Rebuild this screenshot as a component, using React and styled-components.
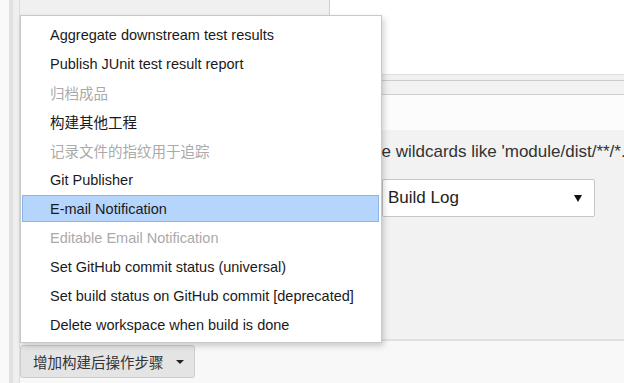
import React from 'react';
import styled, { createGlobalStyle } from 'styled-components';

const GlobalStyle = createGlobalStyle`
  html, body {
    margin: 0;
    padding: 0;
    overflow: hidden;
  }
  body {
    font-family: "Liberation Sans", "Noto Sans CJK SC", Arial, sans-serif;
    color: #333;
  }
`;

const menuItems = [
  { label: 'Aggregate downstream test results' },
  { label: 'Publish JUnit test result report' },
  { label: '归档成品', disabled: true },
  { label: '构建其他工程' },
  { label: '记录文件的指纹用于追踪', disabled: true },
  { label: 'Git Publisher' },
  { label: 'E-mail Notification', active: true },
  { label: 'Editable Email Notification', disabled: true },
  { label: 'Set GitHub commit status (universal)' },
  { label: 'Set build status on GitHub commit [deprecated]' },
  { label: 'Delete workspace when build is done' },
];

const App = () => {
  return (
    <>
      <GlobalStyle />
      <Page>
        <Gutter />
        <Rail />
        <RailInner />
        <Main>
          <TopRow>
            <TopBox />
          </TopRow>
          <HeaderBar />
          <SubBar />
          <WhiteRow />
          <Panel>
            <LabelCol />
            <FieldCol>
              <Help>You can use wildcards like 'module/dist/**/*.zip'. See the includes attribute of Ant fileset.</Help>
              <Select>
                <span>Build Log</span>
                <SelectArrow />
              </Select>
            </FieldCol>
          </Panel>
          <Footer>
            <AddButton>
              增加构建后操作步骤
              <Caret />
            </AddButton>
          </Footer>

          <Menu>
            {menuItems.map(item => (
              <Item key={item.label} disabled={item.disabled} active={item.active}>
                {item.label}
              </Item>
            ))}
          </Menu>
        </Main>
      </Page>
    </>
  );
};

export default App;

const Page = styled.div`
  display: flex;
  width: 624px;
  height: 383px;
  background: #f8f8f8;
  overflow: hidden;
`;

const Gutter = styled.div`
  width: 9px;
  flex-shrink: 0;
  background: #f9f9f9;
`;

const Rail = styled.div`
  width: 4px;
  flex-shrink: 0;
  background: #e1e1e1;
`;

const RailInner = styled.div`
  width: 6px;
  flex-shrink: 0;
  background: #efefef;
`;

const Main = styled.div`
  position: relative;
  flex: 1;
  display: flex;
  flex-direction: column;
  border-left: 1px solid #dcdcdc;
`;

const TopRow = styled.div`
  height: 74px;
  flex-shrink: 0;
  background: #fff;
`;

const TopBox = styled.div`
  width: 309px;
  height: 15px;
  background: #f0f0f0;
  border-right: 1px solid #cfcfcf;
  border-bottom: 1px solid #cfcfcf;
`;

const HeaderBar = styled.div`
  height: 5px;
  flex-shrink: 0;
  background: #f0f0f0;
  border-top: 1px solid #dedede;
`;

const SubBar = styled.div`
  height: 13px;
  flex-shrink: 0;
  background: #f2f2f2;
  border-top: 1px solid #cbcbcb;
  border-bottom: 1px solid #cfcfcf;
`;

const WhiteRow = styled.div`
  height: 35px;
  flex-shrink: 0;
  background: #fcfcfc;
`;

const Panel = styled.div`
  display: grid;
  grid-template-columns: 362px 1fr;
  height: 209px;
  flex-shrink: 0;
  background: #f2f2f2;
  border-bottom: 2px solid #e0e0e0;
`;

const LabelCol = styled.div``;

const FieldCol = styled.div`
  display: flex;
  flex-direction: column;
  padding-top: 12px;
  min-width: 0;
`;

const Help = styled.div`
  font-size: 17px;
  line-height: 19px;
  white-space: nowrap;
  text-indent: -84px;
  color: #333;
`;

const Select = styled.div`
  margin-top: 18px;
  width: 213px;
  height: 38px;
  box-sizing: border-box;
  display: flex;
  align-items: center;
  justify-content: space-between;
  padding: 0 12px 0 5px;
  background: #fff;
  border: 1px solid #c6c6c6;
  border-radius: 2px;
  font-size: 17px;
  color: #222;
`;

const SelectArrow = styled.span`
  width: 0;
  height: 0;
  border-left: 4px solid transparent;
  border-right: 4px solid transparent;
  border-top: 7px solid #111;
`;

const Footer = styled.div`
  flex: 1;
  padding-top: 4px;
  background: #f8f8f8;
`;

const AddButton = styled.div`
  display: inline-flex;
  align-items: center;
  gap: 12px;
  height: 33px;
  box-sizing: border-box;
  padding: 0 10px 0 12px;
  background: #e4e4e4;
  border: 1px solid #cdcdcd;
  border-radius: 3px;
  font-size: 14.5px;
  color: #333;
`;

const Caret = styled.span`
  width: 0;
  height: 0;
  border-left: 4px solid transparent;
  border-right: 4px solid transparent;
  border-top: 4px solid #222;
`;

const Menu = styled.div`
  position: absolute;
  left: 0;
  top: 15px;
  width: 362px;
  box-sizing: border-box;
  display: flex;
  flex-direction: column;
  padding: 4px 0 3px;
  background: #fff;
  border: 1px solid #c8c8c8;
  box-shadow: 2px 3px 6px rgba(0, 0, 0, 0.18);
`;

const Item = styled.div`
  height: 27px;
  flex-shrink: 0;
  margin: 1px 2px 1px 1px;
  box-sizing: border-box;
  display: flex;
  align-items: center;
  padding-left: 27px;
  border: 1px solid ${p => (p.active ? '#8ab6ee' : 'transparent')};
  background: ${p => (p.active ? '#b6d5fd' : 'transparent')};
  font-size: 14.5px;
  white-space: nowrap;
  color: ${p => (p.disabled ? '#aaa' : '#1a1a1a')};
`;
